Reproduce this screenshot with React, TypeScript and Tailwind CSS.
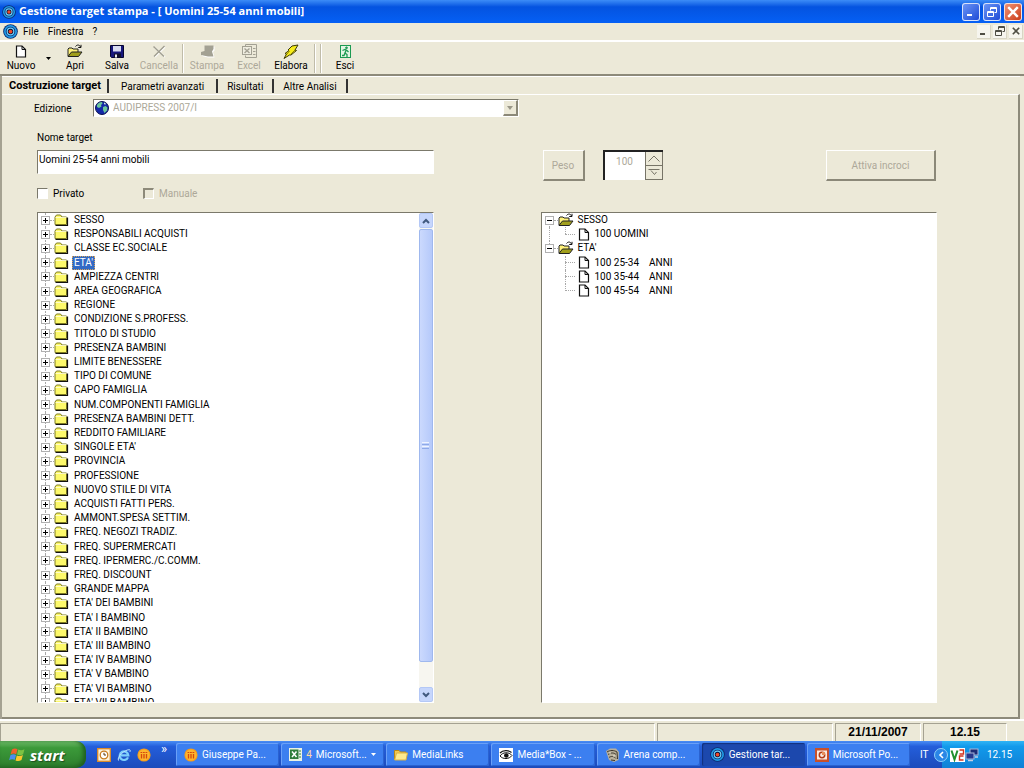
import React from 'react';

const sections = [
  'SESSO',
  'RESPONSABILI ACQUISTI',
  'CLASSE EC.SOCIALE',
  "ETA'",
  'AMPIEZZA CENTRI',
  'AREA GEOGRAFICA',
  'REGIONE',
  'CONDIZIONE S.PROFESS.',
  'TITOLO DI STUDIO',
  'PRESENZA BAMBINI',
  'LIMITE BENESSERE',
  'TIPO DI COMUNE',
  'CAPO FAMIGLIA',
  'NUM.COMPONENTI FAMIGLIA',
  'PRESENZA BAMBINI DETT.',
  'REDDITO FAMILIARE',
  "SINGOLE ETA'",
  'PROVINCIA',
  'PROFESSIONE',
  'NUOVO STILE DI VITA',
  'ACQUISTI FATTI PERS.',
  'AMMONT.SPESA SETTIM.',
  'FREQ. NEGOZI TRADIZ.',
  'FREQ. SUPERMERCATI',
  'FREQ. IPERMERC./C.COMM.',
  'FREQ. DISCOUNT',
  'GRANDE MAPPA',
  "ETA' DEI BAMBINI",
  "ETA' I BAMBINO",
  "ETA' II BAMBINO",
  "ETA' III BAMBINO",
  "ETA' IV BAMBINO",
  "ETA' V BAMBINO",
  "ETA' VI BAMBINO",
  "ETA' VII BAMBINO",
];

const targetRows = [
  { label: 'SESSO', child: false, last: false },
  { label: '100 UOMINI', child: true, last: true },
  { label: "ETA'", child: false, last: true },
  { label: '100 25-34    ANNI', child: true, last: false },
  { label: '100 35-44    ANNI', child: true, last: false },
  { label: '100 45-54    ANNI', child: true, last: true },
];

/* ---------- Icons ---------- */

const TargetIcon = ({ size = 16 }: { size?: number }) => (
  <svg width={size} height={size} viewBox="0 0 16 16" className="shrink-0">
    <circle cx="8" cy="8" r="7.8" fill="#0b2a6e" />
    <circle cx="8" cy="8" r="6" fill="none" stroke="#1f9be6" strokeWidth="1.800" />
    <circle cx="8" cy="8" r="3.500" fill="#06103a" stroke="#6fd0f5" strokeWidth="1.300" />
    <circle cx="8" cy="8" r="2" fill="#f04a28" />
  </svg>
);

const FileIcon = () => (
  <svg width="12" height="13" viewBox="0 0 12 13" className="shrink-0">
    <path d="M1.500 1h5.500l3.500 3.500V12h-9z" fill="#fff" stroke="#111" strokeWidth="1.200" />
    <path d="M7 1v3.500h3.500" fill="none" stroke="#111" />
  </svg>
);

const OpenFolderIcon = () => (
  <svg width="16" height="14" viewBox="0 0 16 14" className="shrink-0">
    <path d="M1 12V5l1-1h3l1 1h5v3" fill="#fff27a" stroke="#222" />
    <path d="M1 12.500 4.500 8h10.500l-3.500 4.500z" fill="#a19f1c" stroke="#222" />
    <path d="M8.500 2.500c1.500-2 4-2 5 .5M14 .8v2.700h-2.800" fill="none" stroke="#111" />
  </svg>
);

const FolderIcon = () => (
  <svg width="15" height="12" viewBox="0 0 15 12" className="shrink-0">
    <path d="M1 10V3l1.500-2h4L8 3h4.500v7.500H1z" fill="#fdf96b" stroke="#7d7a20" />
    <path d="M13.500 3.500v8H1.500" fill="none" stroke="#111" strokeWidth="1.200" />
    <path d="M1.500 3.500h11" stroke="#fffde0" strokeWidth="0.800" />
  </svg>
);

const SaveIcon = () => (
  <svg width="14" height="13" viewBox="0 0 14 13">
    <path d="M.5.500h13v12h-12l-1-1z" fill="#17177c" stroke="#050530" />
    <rect x="3" y="1" width="8" height="5.500" fill="#d9dcf0" />
    <rect x="4" y="8.500" width="7" height="4" fill="#10102c" />
    <rect x="5" y="9.500" width="2" height="3" fill="#e8e8f0" />
  </svg>
);

const CancelIcon = () => (
  <svg width="14" height="13" viewBox="0 0 14 13">
    <path d="M2.500 2.500 13 12M13 2 3 12" stroke="#fff" strokeWidth="1.400" />
    <path d="M1.500 1.500 12 11.500M12.500 1 2 11.500" stroke="#a09e90" strokeWidth="1.400" />
  </svg>
);

const PrintIcon = () => (
  <svg width="15" height="13" viewBox="0 0 15 13">
    <path d="M5.500 1.500h9v4L13 7l1.500 5.500H8L2 11V8l3.500-1z" fill="#fff" />
    <path d="M4.500.500h9v3.500L12 6.500l1.500 5H8L1 10V7l3.500-1z" fill="#a3a193" />
  </svg>
);

const ExcelGrayIcon = () => (
  <svg width="15" height="14" viewBox="0 0 15 14" fill="none" stroke="#a3a193">
    <path d="M3.500 2.500v-2h11v13h-11v-2" />
    <rect x=".5" y="2.500" width="9" height="8" fill="#efede0" />
    <path d="m2.500 4.500 5 4.500M7.500 4.500 2.500 9" strokeWidth="1.400" />
    <path d="M11 4.500h2.500M11 7.500h2.500M11 10.500h2.500" />
  </svg>
);

const BoltIcon = () => (
  <svg width="16" height="15" viewBox="0 0 16 15">
    <path d="M9 2l6-1-3 5 1.500.5L8 11H6.500L1 14.500 3.500 10 2 9.500 6 6.500 5 6z" fill="#f7ec1a" stroke="#3c3a06" strokeLinejoin="round" />
    <path d="M12 6 7.500 10.500M6.500 7 4 10" stroke="#8c8508" />
  </svg>
);

const ExitIcon = () => (
  <svg width="11" height="13" viewBox="0 0 11 13" fill="none" stroke="#1c9a52">
    <rect x=".5" y=".5" width="10" height="12" fill="#e4f5e4" />
    <circle cx="6.500" cy="2.800" r=".9" fill="#1c9a52" />
    <path d="M2.500 5.500 5 4.500l2 1 1.500 1.500M6 5.500 5 8l2 1.500V12M5 8l-1 2.500H2" strokeWidth="1.300" />
  </svg>
);

const GlobeIcon = () => (
  <svg width="14" height="14" viewBox="0 0 14 14" className="shrink-0">
    <circle cx="7" cy="7" r="6.500" fill="#1428a8" stroke="#0a1250" />
    <path d="M2 4c1-2 3-3 5-3l.5 1.500L6 4l.5 1.500L4 7 2 6zM8 6l2.500-1 2 1.500-.5 3L9.500 12 8 9z" fill="#6cc79a" />
    <path d="m9 1.500 2 1.200-.8 1L9 3z" fill="#d5efe4" />
  </svg>
);

const WindowsFlag = () => (
  <svg width="17" height="16" viewBox="0 0 17 16" className="shrink-0">
    <path d="M3 2.500C5 1 7 1.200 8.500 2.200L7.200 7.200C5.500 6.200 3.500 6.200 1.600 7.500z" fill="#f0602c" />
    <path d="M9.300 2.500c2 1 4 .9 6.200-.3l-1.400 5c-2 1.200-4 1.300-6.100.3z" fill="#7cc243" />
    <path d="M1.400 8.300c2-1.200 3.900-1.200 5.600-.3l-1.300 5C4 12 2 12 .1 13.300z" fill="#4b8df0" />
    <path d="M7.800 8.400c2 1 4 .9 6.100-.3l-1.400 5c-2 1.200-4 1.300-6 .3z" fill="#fbc62d" />
  </svg>
);

const OutlookIcon = () => (
  <svg width="14" height="14" viewBox="0 0 14 14">
    <rect x=".7" y=".7" width="12.600" height="12.600" fill="#fdf3dc" stroke="#d98a2b" strokeWidth="1.400" />
    <circle cx="7" cy="7" r="3.800" fill="#fff" stroke="#c77a1e" strokeWidth="1.300" />
    <path d="M7 4.800V7h2" fill="none" stroke="#5b3a10" />
  </svg>
);

const ExplorerIcon = () => (
  <svg width="14" height="14" viewBox="0 0 14 14" fill="none">
    <path d="M11 9.300A4.300 4.300 0 1 1 11.300 7.300H4" stroke="#7fd0fb" strokeWidth="2.200" />
    <path d="M1.500 12.500C-.5 9 8 1 12.800 1.800c.8.500.4 1.500 0 2.200" stroke="#bfe6fd" />
  </svg>
);

const OrangeIcon = () => (
  <svg width="14" height="14" viewBox="0 0 14 14" className="shrink-0">
    <circle cx="7" cy="7" r="6.600" fill="#f59a1a" />
    <circle cx="7" cy="7" r="5.600" fill="#fdb52e" />
    <path d="M4.500 6v4.500M7 6v4.500M9.500 6v4.500" stroke="#d6480c" strokeWidth="1.300" />
    <path d="M3.500 4.500h7" stroke="#d6480c" strokeWidth="1.200" strokeDasharray="1.800 .7" />
  </svg>
);

const ExcelIcon = () => (
  <svg width="13" height="13" viewBox="0 0 13 13" className="shrink-0">
    <rect width="13" height="13" fill="#e9f2e4" />
    <rect x="1" y="1.500" width="8.500" height="9.500" fill="#2f7d3a" />
    <path d="m3 3.500 4.500 5.500M7.500 3.500 3 9" stroke="#fff" strokeWidth="1.500" />
    <path d="M10 3h2M10 6h2M10 9h2" stroke="#2f7d3a" />
  </svg>
);

const YellowFolderIcon = () => (
  <svg width="14" height="12" viewBox="0 0 14 12" className="shrink-0">
    <path d="M.5 10.500v-9h4.500l1.500 1.500H12v2" fill="#f4c94f" stroke="#b98a17" />
    <path d="M.7 11 2.500 4h11L12 11z" fill="#fdea8f" stroke="#d9b144" />
  </svg>
);

const EyeIcon = () => (
  <svg width="14" height="14" viewBox="0 0 14 14" className="shrink-0">
    <rect width="14" height="14" fill="#fff" />
    <path d="M1 8c2.500-4 9-4.500 12-.5-3 4-9 4-12 .5z" fill="#fff" stroke="#111" />
    <circle cx="7.300" cy="7.500" r="2.300" fill="#111" />
    <path d="M1 5C4 2 9.500 2 12.500 4.500" stroke="#111" strokeWidth="1.300" fill="none" />
  </svg>
);

const ArenaIcon = () => (
  <svg width="15" height="14" viewBox="0 0 15 14" className="shrink-0">
    <path d="M1 3 5 .5h6l3 3.500-.5 8L9 14l-5-2z" fill="#b8b09c" />
    <path d="M2 4c3-2 7-2 10 0M3 6.500c3-2 6-2 8 0M4 9.500c2-1.500 5-1.500 7 1M6 12l4 .5M12 4l.5 7" stroke="#3b352a" fill="none" />
    <path d="M4 5h2M8 8h2" stroke="#f0ead8" />
  </svg>
);

const PowerPointIcon = () => (
  <svg width="14" height="14" viewBox="0 0 14 14" className="shrink-0">
    <rect width="14" height="14" fill="#c8502a" />
    <rect x="2" y="2.500" width="10" height="9" fill="#fbe9df" />
    <circle cx="7" cy="7" r="2.700" fill="none" stroke="#b43c18" strokeWidth="1.500" />
    <path d="M7 7V4h3v3z" fill="#e88f5a" />
  </svg>
);

const NetworkIcon = () => (
  <svg width="14" height="14" viewBox="0 0 14 14" className="shrink-0">
    <rect x="5" y="1" width="8" height="6" fill="#1d2c74" stroke="#a9b6d8" />
    <rect x="1" y="5" width="8" height="6" fill="#27388c" stroke="#a9b6d8" />
    <path d="M3 12.500h5M10 9h3" stroke="#c8cfe2" strokeWidth="1.500" />
  </svg>
);

const VncIcon = () => (
  <svg width="15" height="14" viewBox="0 0 15 14" className="shrink-0">
    <rect width="15" height="14" fill="#fff" />
    <path d="m1.500 2.500 3 9 3-9" fill="none" stroke="#1f8f2e" strokeWidth="2" />
    <path d="M9.500 2h4v4h-4M13.500 8h-4v4h4" fill="none" stroke="#d2321e" strokeWidth="1.400" />
  </svg>
);

const MinimizeGlyph = () => (
  <svg width="10" height="10" viewBox="0 0 10 10">
    <path d="M1 8h5" stroke="currentColor" strokeWidth="2" />
  </svg>
);

const RestoreGlyph = () => (
  <svg width="10" height="10" viewBox="0 0 10 10" fill="none" stroke="currentColor">
    <path d="M3.500 3.500v-3h6v5h-2M3 1.500h7" />
    <path d="M.5 4.500h6v5h-6zM0 5.500h7" />
  </svg>
);

const CloseGlyph = ({ size = 10 }: { size?: number }) => (
  <svg width={size} height={size} viewBox="0 0 10 10">
    <path d="m1 1 8 8M9 1 1 9" stroke="currentColor" strokeWidth="2" />
  </svg>
);

const ExpandBox = ({ open }: { open: boolean }) => (
  <svg width="9" height="9" viewBox="0 0 9 9" className="block">
    <rect x=".5" y=".5" width="8" height="8" fill="#fff" stroke="#b0b0b0" />
    <path d={open ? 'M2 4.500h5' : 'M2 4.500h5M4.500 2v5'} stroke="#000" />
  </svg>
);

/* ---------- Window parts ---------- */

const captionButton = 'flex h-[18px] w-[18px] items-center justify-center rounded-[3px] border border-white/80 text-white';
const mdiButton = 'flex h-[14px] w-[14px] items-center justify-center border-r border-b border-[#d8d5c4] bg-[#f6f5ee] text-[#4f4e44]';

const TitleBar = () => (
  <header className="flex h-[23px] items-center bg-linear-to-b from-[#3c8cf7] via-[#0453e0] via-30% to-[#0560f5] px-[2px]">
    <TargetIcon size={14} />
    <h1 className="ml-[3px] flex-1 font-['Open_Sans',sans-serif] text-[11px] font-bold whitespace-pre text-white">
      Gestione target stampa - [ Uomini 25-54 anni mobili]
    </h1>
    <div className="flex gap-[3px]">
      <button aria-label="Riduci a icona" className={`${captionButton} bg-linear-to-br from-[#6b93f5] to-[#1f49d6]`}>
        <MinimizeGlyph />
      </button>
      <button aria-label="Ripristina" className={`${captionButton} bg-linear-to-br from-[#6b93f5] to-[#1f49d6]`}>
        <RestoreGlyph />
      </button>
      <button aria-label="Chiudi" className={`${captionButton} bg-linear-to-br from-[#f09070] to-[#c93a14]`}>
        <CloseGlyph size={12} />
      </button>
    </div>
  </header>
);

const MenuBar = () => (
  <nav className="flex h-[17px] items-center pl-[3px]">
    <TargetIcon size={15} />
    <button className="ml-[5px]">File</button>
    <button className="ml-[9px]">Finestra</button>
    <button className="ml-[9px]">?</button>
    <div className="ml-auto flex gap-[2px] pr-[1px]">
      <button aria-label="Riduci finestra" className={mdiButton}><MinimizeGlyph /></button>
      <button aria-label="Ripristina finestra" className={mdiButton}><RestoreGlyph /></button>
      <button aria-label="Chiudi finestra" className={mdiButton}><CloseGlyph size={8} /></button>
    </div>
  </nav>
);

type ToolProps = { icon: React.ReactNode; label: string; disabled?: boolean };

const Tool = ({ icon, label, disabled }: ToolProps) => (
  <button
    disabled={disabled}
    className="flex w-[42px] flex-col items-center disabled:text-[#aca899]"
  >
    <span className="flex h-[16px] items-center justify-center">{icon}</span>
    <span className="leading-[14px]">{label}</span>
  </button>
);

const ToolSeparator = () => <span className="mx-[2px] h-[29px] w-[2px] border-l border-[#c0bca9] bg-white" />;

const Toolbar = () => (
  <div className="flex h-[36px] items-center border-t-2 border-b-2 border-t-white border-b-[#8d8a7a]">
    <Tool icon={<FileIcon />} label="Nuovo" />
    <button aria-label="Altri tipi" className="flex w-[12px] justify-center">
      <svg width="5" height="3" viewBox="0 0 5 3"><path d="M0 0h5L2.500 3z" /></svg>
    </button>
    <Tool icon={<OpenFolderIcon />} label="Apri" />
    <Tool icon={<SaveIcon />} label="Salva" />
    <Tool icon={<CancelIcon />} label="Cancella" disabled />
    <ToolSeparator />
    <Tool icon={<PrintIcon />} label="Stampa" disabled />
    <Tool icon={<ExcelGrayIcon />} label="Excel" disabled />
    <Tool icon={<BoltIcon />} label="Elabora" />
    <ToolSeparator />
    <ToolSeparator />
    <Tool icon={<ExitIcon />} label="Esci" />
  </div>
);

const tab = 'h-[14px] border-r-2 border-[#333]';

const Tabs = () => (
  <div role="tablist" className="flex h-[18px] items-center border-t border-white">
    <button role="tab" aria-selected="true" className={`${tab} pr-[6px] pl-[7px] text-[11px] leading-[14px] font-bold`}>
      Costruzione target
    </button>
    <button role="tab" aria-selected="false" className={`${tab} px-[12px]`}>Parametri avanzati</button>
    <button role="tab" aria-selected="false" className={`${tab} px-[9px]`}>Risultati</button>
    <button role="tab" aria-selected="false" className={`${tab} px-[9px]`}>Altre Analisi</button>
  </div>
);

const sunken = 'border border-t-[#7b796b] border-l-[#7b796b] border-r-white border-b-white bg-white';
const raised = 'border-t border-l border-r-2 border-b-2 border-t-white border-l-white border-r-[#8b8878] border-b-[#8b8878]';

const SectionTree = () => (
  <div className={`mt-[12px] flex min-h-0 flex-1 ${sunken}`}>
    <div className="min-h-0 flex-1 overflow-hidden">
      <ul className="grid h-[497px] auto-rows-fr">
        {sections.map((name) => (
          <li key={name} className="relative flex min-h-0 items-center pl-[3px]">
            <span className="absolute inset-y-0 left-[7px] border-l border-dotted border-[#a8a8a8]" />
            <button aria-label={`Espandi ${name}`} className="relative"><ExpandBox open={false} /></button>
            <span className="w-[4px] border-t border-dotted border-[#a8a8a8]" />
            <FolderIcon />
            <span
              className={
                name === "ETA'"
                  ? 'ml-[3px] border border-dotted border-[#d8a25a] bg-[#316ac5] px-[1px] leading-[12px] text-white'
                  : 'ml-[3px] px-[2px] leading-[12px]'
              }
            >
              {name}
            </span>
          </li>
        ))}
      </ul>
    </div>
    <div className="flex w-[14px] flex-col bg-[#f7f6f0]">
      <button aria-label="Scorri su" className="flex h-[15px] items-center justify-center rounded-[2px] border border-[#b4c8f6] bg-[#c6d6fc]">
        <svg width="8" height="6" viewBox="0 0 8 6"><path d="M1 5l3-3 3 3" fill="none" stroke="#41597f" strokeWidth="2" /></svg>
      </button>
      <div className="mt-[1px] flex h-[433px] flex-col items-center justify-center gap-[1px] rounded-[2px] border border-[#9fb8ee] bg-linear-to-r from-[#cbd9fd] to-[#b5c9fa]">
        <span className="h-px w-[7px] bg-[#eef3ff]" />
        <span className="h-px w-[7px] bg-[#8ea9e8]" />
        <span className="h-px w-[7px] bg-[#eef3ff]" />
        <span className="h-px w-[7px] bg-[#8ea9e8]" />
      </div>
      <button aria-label="Scorri giù" className="mt-auto flex h-[15px] items-center justify-center rounded-[2px] border border-[#b4c8f6] bg-[#c6d6fc]">
        <svg width="8" height="6" viewBox="0 0 8 6"><path d="M1 1l3 3 3-3" fill="none" stroke="#41597f" strokeWidth="2" /></svg>
      </button>
    </div>
  </div>
);

const TargetTree = () => (
  <div className={`mt-[31px] min-h-0 flex-1 ${sunken}`}>
    <ul className="grid h-[85px] auto-rows-fr">
      {targetRows.map((row, index) =>
        row.child ? (
          <li key={row.label} className="relative flex min-h-0 items-center pl-[23px]">
            {index === 1 && <span className="absolute inset-y-0 left-[7px] border-l border-dotted border-[#a8a8a8]" />}
            <span className={`absolute top-0 left-[23px] border-l border-dotted border-[#a8a8a8] ${row.last ? 'h-1/2' : 'h-full'}`} />
            <span className="mr-[3px] w-[10px] border-t border-dotted border-[#a8a8a8]" />
            <FileIcon />
            <span className="ml-[3px] px-[2px] leading-[12px] whitespace-pre">{row.label}</span>
          </li>
        ) : (
          <li key={row.label} className="relative flex min-h-0 items-center pl-[3px]">
            <span className={`absolute left-[7px] border-l border-dotted border-[#a8a8a8] ${row.last ? 'top-0 h-1/2' : 'top-1/2 h-1/2'}`} />
            <button aria-label={`Comprimi ${row.label}`} className="relative"><ExpandBox open /></button>
            <span className="w-[4px] border-t border-dotted border-[#a8a8a8]" />
            <OpenFolderIcon />
            <span className="ml-[2px] px-[2px] leading-[12px]">{row.label}</span>
          </li>
        )
      )}
    </ul>
  </div>
);

const Editor = () => (
  <main className="flex min-h-0 flex-1 flex-col border-t border-r-2 border-b-2 border-t-white border-r-[#8d8a7a] border-b-[#8d8a7a] pt-[4px] pb-[14px]">
    <div className="flex h-[18px] items-center pl-[32px]">
      <label htmlFor="edizione" className="w-[59px]">Edizione</label>
      <div className={`flex h-[18px] w-[426px] items-center pl-[1px] ${sunken}`}>
        <GlobeIcon />
        <select
          id="edizione"
          disabled
          className="h-[14px] flex-1 appearance-none bg-white pl-[4px] leading-[14px] text-[#aca899] opacity-100"
        >
          <option>AUDIPRESS 2007/I</option>
        </select>
        <span className={`flex h-[16px] w-[15px] items-center justify-center bg-[#ece9d8] ${raised}`}>
          <svg width="6" height="4" viewBox="0 0 6 4"><path d="M0 0h6L3 4z" fill="#9a9788" /></svg>
        </span>
      </div>
    </div>

    <div className="mt-[14px] flex min-h-0 flex-1 gap-[107px] pr-[81px] pl-[35px]">
      <div className="flex min-w-0 flex-1 flex-col">
        <label htmlFor="nome" className="leading-[14px]">Nome target</label>
        <input
          id="nome"
          defaultValue="Uomini 25-54 anni mobili"
          className={`mt-[5px] h-[24px] pb-[5px] pl-[1px] ${sunken}`}
        />
        <div className="mt-[12px] flex h-[14px] items-center">
          <label className="flex w-[106px] items-center gap-[5px]">
            <input type="checkbox" className={`h-[11px] w-[11px] appearance-none ${sunken}`} />
            Privato
          </label>
          <label className="flex items-center gap-[5px] text-[#aca899]">
            <input
              type="checkbox"
              disabled
              className="h-[11px] w-[11px] appearance-none border-t-2 border-r border-b border-l-2 border-t-[#8d8a7a] border-r-white border-b-white border-l-[#8d8a7a]"
            />
            Manuale
          </label>
        </div>
        <SectionTree />
      </div>

      <div className="flex min-w-0 flex-1 flex-col pt-[19px]">
        <div className="flex h-[31px] items-start">
          <button disabled className={`ml-[2px] h-[31px] w-[42px] text-[#aca899] ${raised}`}>Peso</button>
          <div className="ml-[18px] flex h-[30px] w-[60px] border-t-2 border-l-2 border-[#222] bg-white">
            <input
              aria-label="Peso"
              disabled
              defaultValue="100"
              className="h-[18px] w-[40px] text-center text-[#aca899]"
            />
            <div className="flex flex-1 flex-col border-l border-[#777467] bg-[#ece9d8] text-[#777467]">
              <button aria-label="Aumenta" disabled className="flex flex-1 items-center justify-center border-r border-b border-[#777467]">
                <svg width="12" height="7" viewBox="0 0 12 7"><path d="M.5 6.500 6 1l5.500 5.500" fill="none" stroke="currentColor" /></svg>
              </button>
              <button aria-label="Diminuisci" disabled className="flex flex-1 items-center justify-center border-r border-b border-[#777467]">
                <svg width="12" height="7" viewBox="0 0 12 7"><path d="M.5.500h11M3 1.500 6.500 5.500 8.500 3" fill="none" stroke="currentColor" /></svg>
              </button>
            </div>
          </div>
          <button disabled className={`mr-[1px] ml-auto h-[31px] w-[110px] text-[#aca899] ${raised}`}>Attiva incroci</button>
        </div>
        <TargetTree />
      </div>
    </div>
  </main>
);

const statusCell = 'border-t border-l border-r border-t-[#a5a292] border-l-[#a5a292] border-r-white';

const StatusBar = () => (
  <footer className="flex h-[22px] gap-[2px] border-t-2 border-white pt-[2px] font-['Liberation_Sans',sans-serif] text-[12px] leading-[17px] font-bold">
    <span className={`flex-1 ${statusCell}`} />
    <span className={`w-[176px] ${statusCell}`} />
    <span className={`w-[86px] text-center ${statusCell}`}>21/11/2007</span>
    <span className={`mr-[17px] w-[84px] text-center ${statusCell}`}>12.15</span>
  </footer>
);

const tasks = [
  { icon: <OrangeIcon />, label: 'Giuseppe Pa...' },
  { icon: <ExcelIcon />, label: 'Microsoft...', count: '4' },
  { icon: <YellowFolderIcon />, label: 'MediaLinks' },
  { icon: <EyeIcon />, label: 'Media*Box - ...' },
  { icon: <ArenaIcon />, label: 'Arena comp...' },
  { icon: <TargetIcon size={15} />, label: 'Gestione tar...', active: true },
  { icon: <PowerPointIcon />, label: 'Microsoft Po...' },
];

const Taskbar = () => (
  <div className="flex h-[27px] items-stretch bg-linear-to-b from-[#4a8df5] via-[#245edb] via-20% to-[#1c4bbb] text-white">
    <button className="flex w-[86px] items-center gap-[4px] rounded-r-[10px] bg-linear-to-b from-[#6fbb6a] via-[#3c9a3a] via-25% to-[#2c7d2c] pl-[9px] shadow-[inset_-3px_-1px_4px_#1f5f1f]">
      <WindowsFlag />
      <span className="font-['Open_Sans',sans-serif] text-[15px] leading-[18px] font-bold italic [text-shadow:1px_1px_1px_#1d4d1d]">start</span>
    </button>
    <div className="flex w-[88px] items-center gap-[6px] pl-[11px]">
      <button aria-label="Outlook"><OutlookIcon /></button>
      <button aria-label="Internet Explorer"><ExplorerIcon /></button>
      <button aria-label="Collegamento"><OrangeIcon /></button>
      <button aria-label="Altri collegamenti" className="ml-[4px] self-start text-[13px] leading-[16px]">»</button>
    </div>
    <div className="flex min-w-0 flex-1 gap-[2px] py-[2px] pl-[2px]">
      {tasks.map((task) => (
        <button
          key={task.label}
          className={
            task.active
              ? 'flex min-w-0 flex-1 items-center gap-[4px] rounded-[2px] bg-[#1c48ad] px-[8px] shadow-[inset_1px_1px_1px_#12307c]'
              : 'flex min-w-0 flex-1 items-center gap-[4px] rounded-[2px] bg-[#3c7ff0] px-[8px] shadow-[inset_1px_1px_0_#6aa0f8,inset_-1px_-1px_0_#2a62d0]'
          }
        >
          {task.icon}
          {task.count && <span className="text-[#ffd9a0]">{task.count}</span>}
          <span className="whitespace-nowrap">{task.label}</span>
          {task.count && (
            <svg width="5" height="3" viewBox="0 0 5 3" className="ml-auto shrink-0"><path d="M0 0h5L2.500 3z" fill="#fff" /></svg>
          )}
        </button>
      ))}
    </div>
    <span className="flex w-[32px] items-center pl-[10px]">IT</span>
    <div className="relative flex w-[82px] items-center bg-linear-to-b from-[#2fb4f5] via-[#129aeb] via-20% to-[#1081d6] pl-[8px]">
      <button aria-label="Mostra icone nascoste" className="absolute left-[-8px] flex h-[14px] w-[14px] items-center justify-center rounded-full border border-[#8fd0fa] bg-[#2a86e6]">
        <svg width="6" height="8" viewBox="0 0 6 8"><path d="M5 1 2 4l3 3" fill="none" stroke="#fff" strokeWidth="1.600" /></svg>
      </button>
      <VncIcon />
      <NetworkIcon />
      <span className="ml-[8px]">12.15</span>
    </div>
  </div>
);

const App: React.FC = () => {
  return (
    <div className="flex h-screen min-h-[768px] flex-col bg-[#ece9d8] font-[Roboto,'Liberation_Sans',sans-serif] text-[10px] text-black">
      <TitleBar />
      <MenuBar />
      <Toolbar />
      <div className="mr-[4px] flex min-h-0 flex-1 flex-col border-l-2 border-[#a5a292]">
        <Tabs />
        <Editor />
      </div>
      <StatusBar />
      <Taskbar />
    </div>
  );
};

export default App;
